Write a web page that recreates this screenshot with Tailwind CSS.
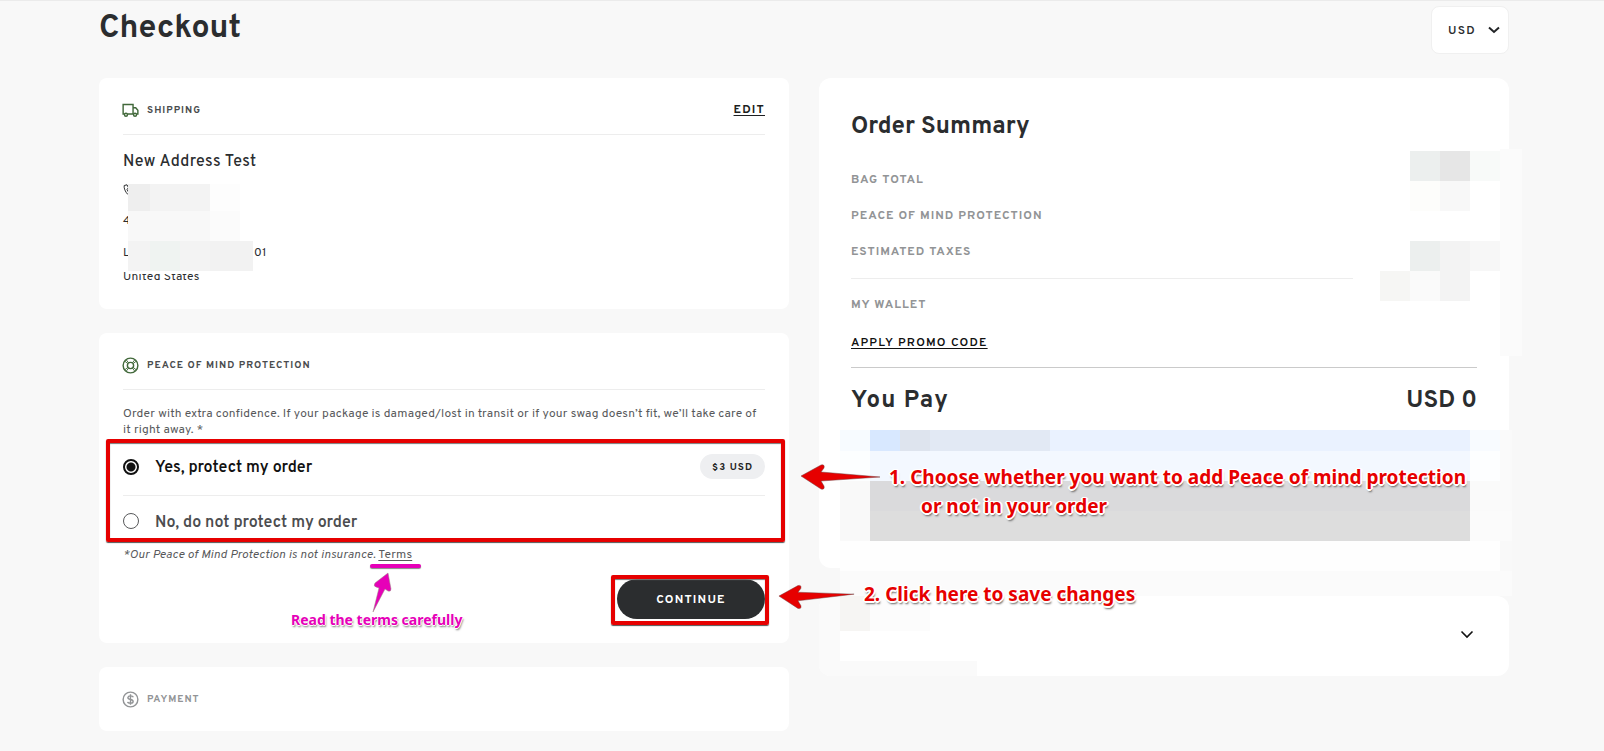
<!DOCTYPE html>
<html lang="en">
<head>
<meta charset="utf-8">
<title>Checkout</title>
<script src="https://cdn.jsdelivr.net/npm/@tailwindcss/browser@4"></script>
</head>
<body class="min-h-screen border-t border-[#ebebeb] bg-[#f8f8f8] pr-[95px] pl-[99px] font-['Overpass','Roboto',sans-serif] text-[#2b2d2f]">
<header class="flex h-[77px] items-start justify-between">
  <h1 class="pt-2 text-[32px] leading-10 font-bold">Checkout</h1>
  <div class="relative mt-[5px]">
    <select aria-label="Currency" class="h-12 w-[78px] appearance-none rounded-lg border border-[#f0f0f0] bg-white pt-0.5 pl-4 text-xs font-semibold tracking-widest">
      <option>USD</option>
    </select>
    <svg class="pointer-events-none absolute top-5 right-[9px]" width="12" height="8" viewBox="0 0 12 8" fill="none" stroke="#222426" stroke-width="2"><path d="M1 1.500l5 4.500 5-4.500"/></svg>
  </div>
</header>

<main class="grid grid-cols-2 items-start gap-[30px]">
  <div class="flex flex-col gap-6">
    <section class="relative rounded-lg bg-white px-6 pt-6 pb-5">
      <div class="flex h-[33px] items-start justify-between border-b border-[#ededed]">
        <h2 class="flex h-4 items-center gap-2 text-[10px] font-bold tracking-widest text-[#4a4c4e]">
          <svg class="-ml-px" width="17" height="16" viewBox="0 0 18 16" fill="none" stroke="#41683a" stroke-width="1.500"><path d="M2.500 12.300H1.200V2.200h10.500v10.100H5.800M11.700 5.600h2.800l2.300 2.800v3.900h-1.300M11.700 12.300h.6"/><circle cx="4.200" cy="13" r="1.600"/><circle cx="13.800" cy="13" r="1.600"/></svg>
          SHIPPING
        </h2>
        <a href="#" class="text-xs leading-4 font-bold tracking-widest text-[#1d1f21] underline underline-offset-2">EDIT</a>
      </div>
      <h3 class="mt-[17px] mb-[7px] text-base leading-5 font-medium tracking-wide">New Address Test</h3>
      <div class="text-xs leading-6 tracking-wide">
        <p class="flex h-6 items-center"><svg width="12" height="14" viewBox="0 0 12 14" fill="none" stroke="#2b2d2f"><path d="M1.200 1.500L4 .8l1.500 3-1.500 1.500c.8 2 1.800 3.500 3.200 4.500l1.800-1 2 2.300-1.500 1.700C5 12.500.500 6 1.200 1.500z"/></svg></p>
        <p class="mt-[6px]">4</p>
        <p class="mt-2 flex"><span class="w-[131px]">L</span>01</p>
        <p>United States</p>
      </div>
      <!-- Redacted address -->
      <div aria-hidden="true" class="absolute top-[106px] left-[29px] w-[125px] bg-white pb-[3px]">
        <div class="flex h-[27px]"><i class="w-[22px] bg-[#eeeeee]"></i><i class="w-[60px] bg-[#f3f3f3]"></i><i class="w-[30px] bg-[#fdfdfd]"></i></div>
        <div class="flex h-[30px]"><i class="w-[82px] bg-[#f8f8f8]"></i><i class="w-[30px] bg-[#fbfbfb]"></i></div>
        <div class="flex h-[30px]"><i class="w-[22px] bg-[#f3f3f3]"></i><i class="w-[30px] bg-[#eff3f1]"></i><i class="w-[30px] bg-[#f3f3f3]"></i><i class="w-[43px] bg-[#f2f2f2]"></i></div>
      </div>
    </section>

    <section class="relative rounded-lg bg-white p-6">
      <div class="h-[33px] border-b border-[#ededed]">
        <h2 class="flex h-4 items-center gap-2 text-[10px] font-bold tracking-widest text-[#4a4c4e]">
          <svg class="-ml-px" width="17" height="17" viewBox="0 0 18 18" fill="none" stroke="#41683a" stroke-width="1.500"><circle cx="9" cy="9" r="7.800"/><circle cx="9" cy="9" r="3.300"/><path d="M3.200 4.600l3 2.400M4.600 3.200l2.400 3M14.800 4.600l-3 2.400M13.400 3.200l-2.400 3M3.200 13.400l3-2.400M4.600 14.800l2.400-3M14.800 13.400l-3-2.400M13.400 14.800l-2.400-3" stroke-width="1"/></svg>
          PEACE OF MIND PROTECTION
        </h2>
      </div>
      <p class="mt-4 text-xs leading-4 tracking-[0.2px] text-[#58595b]">Order with extra confidence. If your package is damaged/lost in transit or if your swag doesn’t fit, we’ll take care of it right away. *</p>
      <fieldset class="relative" aria-label="Peace of mind protection">
        <div class="flex h-[58px] items-center border-b border-[#ededed]">
          <input id="yes" name="protect" type="radio" checked class="size-4 appearance-none rounded-full border border-[#58595b] checked:border-2 checked:border-[#111] checked:bg-[radial-gradient(circle,#111_4px,transparent_5px)]">
          <label for="yes" class="ml-4 flex-1 pt-[3px] text-base font-semibold text-[#111]">Yes, protect my order</label>
          <span class="flex h-[25px] items-center rounded-full bg-[#eeeff1] px-3 pt-0.5 text-[10px] font-bold tracking-widest text-[#222]">$3 USD</span>
        </div>
        <div class="flex h-[50px] items-center">
          <input id="no" name="protect" type="radio" class="size-4 appearance-none rounded-full border border-[#58595b] checked:border-2 checked:border-[#111] checked:bg-[radial-gradient(circle,#111_4px,transparent_5px)]">
          <label for="no" class="ml-4 pt-1 text-base font-semibold text-[#4c4d4f]">No, do not protect my order</label>
        </div>
        <div class="pointer-events-none absolute top-px -right-5 bottom-[4px] -left-[17px] rounded-xs border-4 border-[#e60000] shadow-[0_1px_1px_#555,inset_0_1px_1px_#777]"></div>
      </fieldset>
      <p class="pt-px text-xs leading-4 tracking-[0.2px] text-[#58595b]"><em>*Our Peace of Mind Protection is not insurance.</em> <a href="#" class="relative underline underline-offset-2">Terms<span class="absolute top-[17px] -left-2 h-1 w-[51px] rounded-full bg-[#e600b8] shadow-[0_1px_1px_#888]"></span></a></p>
      <div class="mt-4 flex justify-end">
        <div class="relative">
          <button class="h-10 w-[148px] rounded-full bg-[#2b2d2f] pt-0.5 text-xs font-bold tracking-widest text-white">CONTINUE</button>
          <div class="pointer-events-none absolute -top-[4px] -right-1 -bottom-[6px] -left-[6px] rounded-xs border-4 border-[#e60000] shadow-[0_1px_1px_#555,inset_0_1px_1px_#777]"></div>
        </div>
      </div>
      <!-- Terms callout -->
      <svg class="absolute top-[239px] left-[272px]" width="22" height="42" viewBox="0 0 22 42"><path d="M2 40L8 16l-3-1q-3-1-1-4L17 1l3 16q0 3-3 2l-3-2z" fill="#e600b8" stroke="#99887f" stroke-width=".5"/></svg>
      <p class="absolute top-[277px] left-[192px] font-['Noto_Sans',sans-serif] text-sm leading-5 font-bold whitespace-nowrap text-[#e600b8] [text-shadow:1px_0_#fff,-1px_0_#fff,0_1px_#fff,0_-1px_#fff,1px_2px_2px_#777]">Read the terms carefully</p>
    </section>

    <section class="rounded-lg bg-white p-6">
      <h2 class="flex h-4 items-center gap-2 text-[10px] font-bold tracking-widest text-[#929496]">
        <svg class="-ml-px" width="17" height="17" viewBox="0 0 18 18" fill="none" stroke="#929496" stroke-width="1.500"><circle cx="9" cy="9" r="7.800"/><path d="M12 6.500Q11.500 5.200 9 5.200T6.200 7Q6.200 8.600 9 9t2.800 2q0 1.900-2.800 1.900T6 11.500M9 3.500v11"/></svg>
        PAYMENT
      </h2>
    </section>
  </div>

  <div class="relative flex flex-col gap-7">
    <section class="relative rounded-xl bg-white px-8 pt-[33px]">
      <h2 class="text-2xl leading-8 font-bold">Order Summary</h2>
      <div class="mt-[19px] mr-[124px] border-b border-[#ededed] pb-2 text-xs leading-9 font-bold tracking-[1px] text-[#929496]">
        <p>BAG TOTAL</p>
        <p>PEACE OF MIND PROTECTION</p>
        <p>ESTIMATED TAXES</p>
      </div>
      <p class="mt-2 text-xs leading-9 font-bold tracking-[1px] text-[#929496]">MY WALLET</p>
      <div class="flex h-[45px] items-start border-b border-[#cacaca] pt-[11px]">
        <a href="#" class="text-xs leading-[18px] font-semibold tracking-widest text-[#111] underline underline-offset-2">APPLY PROMO CODE</a>
      </div>
      <div class="flex justify-between pt-[17px] text-2xl leading-8 font-bold"><span class="tracking-wider">You Pay</span><span>USD 0</span></div>
      <div class="h-[151px]"></div>

      <!-- Redacted amounts -->
      <div aria-hidden="true" class="absolute top-[73px] -right-[13px] grid grid-cols-[repeat(4,30px)_22px] grid-rows-[30px_30px_30px_30px_30px]">
        <i></i><i class="bg-[#ecefee]"></i><i class="bg-[#e6e6e6]"></i><i class="bg-[#f8faf9]"></i><i></i>
        <i></i><i class="bg-[#fdfdfb]"></i><i class="bg-[#f8f8f8]"></i><i></i><i></i>
        <i></i><i></i><i></i><i></i><i></i>
        <i></i><i class="bg-[#ecefee]"></i><i class="bg-[#f3f3f3]"></i><i class="bg-[#f7f7f7]"></i><i></i>
        <i class="bg-[#f6f6f4]"></i><i class="bg-[#fafafa]"></i><i class="bg-[#f3f3f3]"></i><i></i><i></i>
      </div>
      <i aria-hidden="true" class="absolute top-[71px] -right-[13px] h-[207px] w-[22px] bg-[#fbfbfb]"></i>
      <!-- Redacted payment buttons -->
      <div aria-hidden="true" class="absolute top-[352px] -right-[3px] left-[21px]">
        <div class="flex h-[21px]"><i class="w-[30px] bg-[#f7fbff]"></i><i class="w-[30px] bg-[#d8e8ff]"></i><i class="w-[30px] bg-[#dee4ee]"></i><i class="w-[120px] bg-[#e2e9f4]"></i><i class="flex-1 bg-[#eaf2ff]"></i><i class="w-[30px] bg-[#f8fbff]"></i><i class="w-3 bg-[#fafafa]"></i></div>
        <div class="flex h-[30px]"><i class="w-[30px] bg-[#fcfeff]"></i><i class="flex-1 bg-[#f3f8ff]"></i><i class="w-[30px] bg-[#fdfeff]"></i><i class="w-3 bg-[#fafafa]"></i></div>
        <div class="flex h-[30px]"><i class="w-[30px] bg-[#f9f9f9]"></i><i class="flex-1 bg-[#dadadc]"></i><i class="w-[42px] bg-[#fafafa]"></i></div>
        <div class="flex h-[30px]"><i class="w-[30px] bg-[#f9f9f9]"></i><i class="flex-1 bg-[#dddddd]"></i><i class="w-[42px] bg-[#fbfbfb]"></i></div>
        <div class="flex h-[30px]"><i class="flex-1 bg-[#fefefe]"></i><i class="w-3 bg-[#f9f9f9]"></i></div>
        <div class="h-[25px] bg-[#fbfbfb]"></div>
      </div>
    </section>

    <section class="relative overflow-hidden rounded-xl bg-white">
      <div aria-hidden="true" class="absolute inset-y-0 left-0 w-[21px] bg-[#fafafa]"></div>
      <div aria-hidden="true" class="absolute top-0 left-[21px] flex h-[35px]"><i class="w-[30px] bg-[#f6f5f3]"></i><i class="w-[60px] bg-[#fcfcfc]"></i></div>
      <div aria-hidden="true" class="absolute bottom-0 left-0 h-[15px] w-[158px] bg-[#fafafa]"></div>
      <button aria-label="Expand" class="relative flex h-20 w-full items-center justify-end pr-[35px] pb-1">
        <svg width="14" height="9" viewBox="0 0 14 9" fill="none" stroke="#111" stroke-width="1.600"><path d="M1.500 1.500L7 7l5.500-5.500"/></svg>
      </button>
    </section>

    <!-- Step callouts -->
    <svg class="absolute top-[384px] -left-[19px]" width="82" height="30" viewBox="0 0 82 30"><path d="M1 14L21 3q4-1 3 3l-3 4 59 5-59 4 3 5q1 4-3 3z" fill="#e60000" stroke="#734040" stroke-width=".5"/></svg>
    <div class="absolute top-[385px] left-[70px] font-['Noto_Sans',sans-serif] text-[19px] leading-[29px] font-bold whitespace-nowrap text-[#e60000] [text-shadow:1px_1px_#fff,-1px_1px_#fff,1px_-1px_#fff,-1px_-1px_#fff,2px_0_#fff,-2px_0_#fff,0_2px_#fff,1px_3px_2px_#666]">
      <p>1. Choose whether you want to add Peace of mind protection</p>
      <p class="pl-8">or not in your order</p>
    </div>
    <svg class="absolute top-[504px] -left-[41px]" width="78" height="30" viewBox="0 0 82 30"><path d="M1 14L21 3q4-1 3 3l-3 4 59 2-59 7 3 5q1 4-3 3z" fill="#e60000" stroke="#734040" stroke-width=".5"/></svg>
    <p class="absolute top-[502px] left-[45px] font-['Noto_Sans',sans-serif] text-[19px] leading-[29px] font-bold whitespace-nowrap text-[#e60000] [text-shadow:1px_1px_#fff,-1px_1px_#fff,1px_-1px_#fff,-1px_-1px_#fff,2px_0_#fff,-2px_0_#fff,0_2px_#fff,1px_3px_2px_#666]">2. Click here to save changes</p>
  </div>
</main>
</body>
</html>
